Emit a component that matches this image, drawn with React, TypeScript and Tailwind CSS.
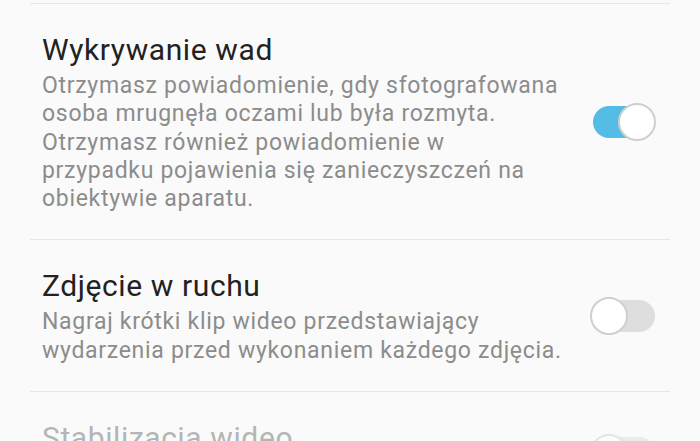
function Toggle({ on, disabled }: { on: boolean; disabled?: boolean }) {
  return (
    <div className={`relative h-[32px] w-[62px] shrink-0 rounded-full ${on ? "bg-[#55bce6]" : "bg-[#dedede]"} ${disabled ? "opacity-50" : ""}`}>
      <div
        className={`absolute top-[-3px] h-[38px] w-[38px] rounded-full border-2 border-[#cfcfcf] bg-white ${on ? "right-[-1px]" : "left-[-3px]"}`}
      />
    </div>
  );
}

function Row({
  title,
  desc,
  on,
  disabled,
}: {
  title: string;
  desc: string[];
  on: boolean;
  disabled?: boolean;
}) {
  return (
    <div className="flex items-center border-t border-[#e6e6e6] pl-[12px] pr-[15px]">
      <div className="flex-1 pt-[28px] pb-[26px]">
        <div className={`text-[30px] leading-[36px] tracking-[0.6px] ${disabled ? "text-[#b5b5b5]" : "text-[#222222]"}`}>{title}</div>
        <div className="mt-[4px] text-[23px] leading-[28.3px] tracking-[0.7px] text-[#8c8c8c]">
          {desc.map((l) => (
            <div key={l} className="whitespace-nowrap">{l}</div>
          ))}
        </div>
      </div>
      <Toggle on={on} disabled={disabled} />
    </div>
  );
}

export default function App() {
  return (
    <main
      className="h-[441px] w-[700px] overflow-hidden bg-[#fafafa] pt-[3px]"
      style={{ fontFamily: "Roboto, 'Noto Sans', sans-serif" }}
    >
      <div className="mx-[30px]">
        <Row
          title="Wykrywanie wad"
          on
          desc={[
            "Otrzymasz powiadomienie, gdy sfotografowana",
            "osoba mrugnęła oczami lub była rozmyta.",
            "Otrzymasz również powiadomienie w",
            "przypadku pojawienia się zanieczyszczeń na",
            "obiektywie aparatu.",
          ]}
        />
        <Row
          title="Zdjęcie w ruchu"
          on={false}
          desc={[
            "Nagraj krótki klip wideo przedstawiający",
            "wydarzenia przed wykonaniem każdego zdjęcia.",
          ]}
        />
        <Row title="Stabilizacja wideo" on={false} disabled desc={["Włącz stabilizację obrazu."]} />
      </div>
    </main>
  );
}
